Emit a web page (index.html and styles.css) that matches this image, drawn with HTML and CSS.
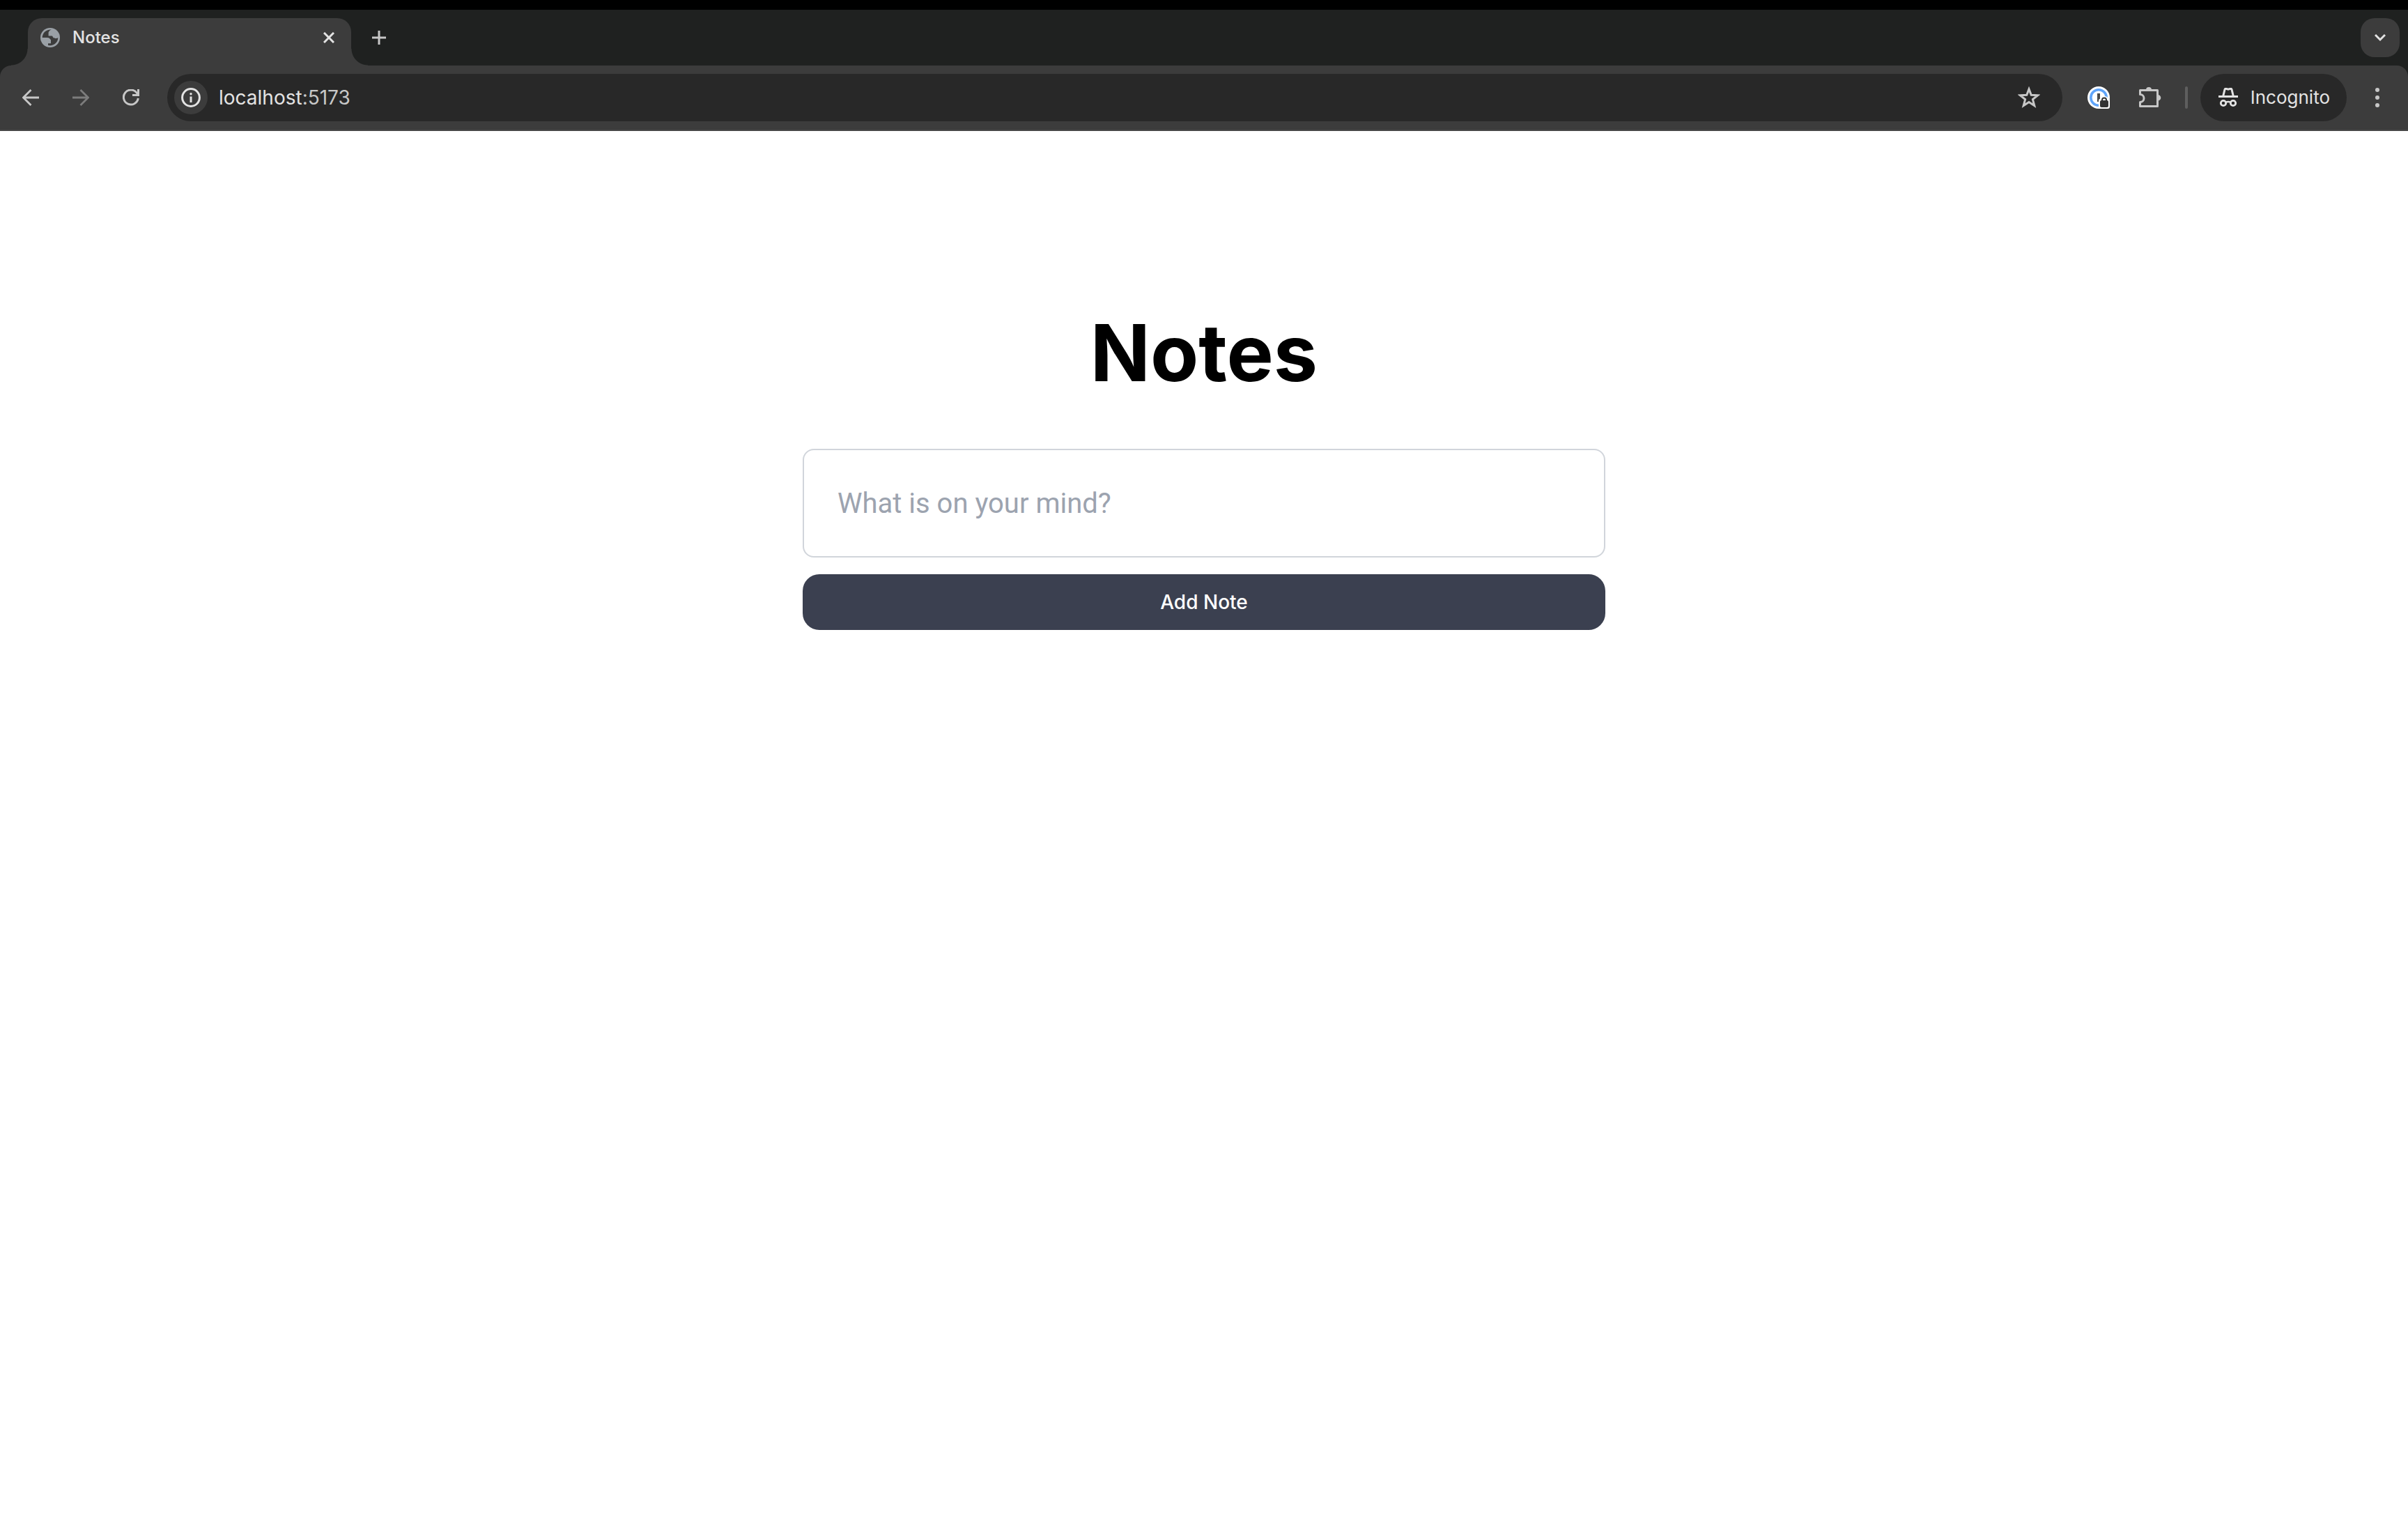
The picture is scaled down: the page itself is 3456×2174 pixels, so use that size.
FILE: index.html
```html
<!DOCTYPE html>
<html lang="en">
<head>
  <meta charset="utf-8">
  <meta name="viewport" content="width=device-width, initial-scale=1">
  <title>Notes</title>
  <link rel="stylesheet" href="styles.css">
</head>
<body>
  <header class="browser">
    <div class="tab-strip">
      <div class="tab">
        <svg class="icon-28" viewBox="0 0 28 28" aria-hidden="true">
          <circle cx="14" cy="14" r="14" fill="#9aa0a6"/>
          <path fill="#3c3c3c" d="M16 2.8C14 3 12.500 4 11.600 6.600L11.600 11.500H18L19.500 14L21.800 15.300L25.300 14.300A11.300 11.300 0 0 1 11 24.900V22.200H15V17.200L12.500 14.600L10 14H2.700A11.300 11.300 0 0 1 16 2.800Z"/>
          <path fill="#9aa0a6" d="M16.500 2.500V5.200L15 6.800H12.500V10.500H16.500L18.500 14.200H24L26 13L25 8L20 3Z"/>
        </svg>
        <span class="tab-title">Notes</span>
        <button class="icon-button close" type="button" aria-label="Close tab">
          <svg class="icon-16" viewBox="0 0 16 16"><path d="M1 1L15 15M15 1L1 15" stroke="#e3e3e3" stroke-width="3" fill="none"/></svg>
        </button>
      </div>
      <button class="icon-button new-tab" type="button" aria-label="New tab">
        <svg class="icon-20" viewBox="0 0 20 20"><path d="M10 0V20M0 10H20" stroke="#c7c7c7" stroke-width="3" fill="none"/></svg>
      </button>
      <button class="icon-button tab-search" type="button" aria-label="Search tabs">
        <svg class="icon-16" viewBox="0 0 16 16"><path d="M1 4L8 11L15 4" stroke="#e3e3e3" stroke-width="3" fill="none"/></svg>
      </button>
    </div>
    <div class="toolbar">
      <nav class="nav-buttons" aria-label="History">
        <button class="icon-button" type="button" aria-label="Back">
          <svg class="icon-24" viewBox="0 0 24 24"><path d="M24 12H2M12.500 1L1.500 12L12.500 23" stroke="#c7c7c7" stroke-width="2.800" fill="none"/></svg>
        </button>
        <button class="icon-button" type="button" aria-label="Forward" disabled>
          <svg class="icon-24" viewBox="0 0 24 24"><path d="M0 12H22M11.500 1L22.500 12L11.500 23" stroke="#7c7c7c" stroke-width="2.800" fill="none"/></svg>
        </button>
        <button class="icon-button" type="button" aria-label="Reload">
          <svg class="icon-24" viewBox="0 0 24 24"><path d="M22.300 13A10.500 10.500 0 1 1 20.500 5.500L22 8" stroke="#c7c7c7" stroke-width="3" fill="none"/><path d="M21 0H24V10H14V7H21Z" fill="#c7c7c7"/></svg>
        </button>
      </nav>
      <div class="omnibox">
        <button class="icon-button site-info" type="button" aria-label="View site information">
          <svg class="icon-28" viewBox="0 0 28 28"><circle cx="14" cy="14" r="12.400" stroke="#e3e3e3" stroke-width="3" fill="none"/><circle cx="14" cy="8.800" r="1.700" fill="#e3e3e3"/><path d="M12.500 12.500H15.500V21H12.500Z" fill="#e3e3e3"/></svg>
        </button>
        <a class="url" href="#">localhost<span class="port">:5173</span></a>
        <button class="icon-button" type="button" aria-label="Bookmark this tab">
          <svg class="icon-32" viewBox="0 0 32 32"><path d="M16 3.800L19.200 12.200L28.500 12.800L21.400 18.600L23.800 27.600L16 22.600L8.200 27.600L10.600 18.600L3.500 12.800L12.800 12.200Z" stroke="#c7c7c7" stroke-width="3" fill="none"/></svg>
        </button>
      </div>
      <div class="actions">
        <button class="icon-button" type="button" aria-label="Password manager">
          <svg class="icon-32" viewBox="0 0 32 32">
            <circle cx="16" cy="16" r="16" fill="#fff"/>
            <circle cx="16" cy="16" r="11.200" stroke="#60a5fa" stroke-width="3.600" fill="none"/>
            <path d="M14 10H18V22H14Z" fill="#4a4a4a"/>
            <path d="M16 20Q16 18 18.500 17.500Q20 14 24 14Q28 14 29.500 17L32 19V29Q32 32 29 32H16Z" fill="#fff"/>
            <path d="M21 21V19.500A3 3 0 0 1 27 19.500V21" stroke="#333333" stroke-width="2" fill="none"/>
            <rect x="18" y="20" width="12" height="10" rx="2" fill="#333333"/>
          </svg>
        </button>
        <button class="icon-button" type="button" aria-label="Extensions">
          <svg class="icon-32" viewBox="0 0 32 32"><path d="M3.500 5.500H26.500V28.500H1.500V22.500A4.700 4.700 0 0 0 1.500 11.500V5.500Z" stroke="#c7c7c7" stroke-width="3" stroke-linejoin="round" fill="none"/><path d="M10 5A4 4 0 0 1 18 5ZM27 12A4.300 4.300 0 0 1 27 20.600Z" fill="#c7c7c7"/></svg>
        </button>
        <span class="divider"></span>
      </div>
      <button class="incognito" type="button">
        <svg class="icon-28" viewBox="0 0 28 28" aria-hidden="true"><path d="M6.800 11.500L9 2.500Q9.500 1 11 1.300L14 2.200L17 1.300Q18.500 1 19 2.500L21.200 11.500" stroke="#e3e3e3" stroke-width="3" fill="none"/><path d="M0 11H28V14H0Z" fill="#e3e3e3"/><path d="M10 21Q14 19 18 21" stroke="#e3e3e3" stroke-width="2.500" fill="none"/><circle cx="7" cy="22" r="3.700" stroke="#e3e3e3" stroke-width="2.800" fill="none"/><circle cx="21" cy="22" r="3.700" stroke="#e3e3e3" stroke-width="2.800" fill="none"/></svg>
        <span>Incognito</span>
      </button>
      <button class="icon-button menu" type="button" aria-label="Menu">
        <svg class="icon-28" viewBox="0 0 28 28"><g fill="#c7c7c7"><circle cx="14" cy="3" r="3"/><circle cx="14" cy="14" r="3"/><circle cx="14" cy="25" r="3"/></g></svg>
      </button>
    </div>
  </header>
  <main class="page">
    <h1 class="title">Notes</h1>
    <form class="note-form">
      <input class="note-input" type="text" placeholder="What is on your mind?" aria-label="Note">
      <button class="add-note" type="button">Add Note</button>
    </form>
  </main>
</body>
</html>
```

FILE: styles.css
```css
*,
*::before,
*::after {
  box-sizing: border-box;
}

body {
  margin: 0;
  background: #ffffff;
  color: #000000;
  font-family: Inter, "Liberation Sans", sans-serif;
}

button {
  font: inherit;
  border: 0;
  margin: 0;
}

svg {
  display: block;
  flex: none;
}

.icon-16 { width: 16px; height: 16px; }
.icon-20 { width: 20px; height: 20px; }
.icon-24 { width: 24px; height: 24px; }
.icon-28 { width: 28px; height: 28px; }
.icon-32 { width: 32px; height: 32px; }

.icon-button {
  display: flex;
  align-items: center;
  justify-content: center;
  flex: none;
  padding: 0;
  background: transparent;
}

/* Browser frame */
.browser {
  background: #1f2120;
  border-top: 14px solid #000000;
}

.tab-strip {
  display: flex;
  height: 80px;
  padding: 12px 12px 0 40px;
}

.tab {
  position: relative;
  display: flex;
  align-items: center;
  width: 464px;
  height: 68px;
  padding: 0 24px 12px 18px;
  background: #3c3c3c;
  border-radius: 20px 20px 0 0;
}

/* Flared feet that join the tab to the toolbar */
.tab::before,
.tab::after {
  content: "";
  position: absolute;
  bottom: 0;
  width: 24px;
  height: 24px;
}

.tab::before {
  right: 100%;
  background: radial-gradient(circle at 0 0, transparent 23px, #3c3c3c 24px);
}

.tab::after {
  left: 100%;
  background: radial-gradient(circle at 100% 0, transparent 23px, #3c3c3c 24px);
}

.tab-title {
  flex: 1;
  margin-left: 18px;
  color: #e3e3e3;
  font-size: 24px;
  font-weight: 500;
  line-height: 32px;
}

.new-tab {
  width: 56px;
  height: 56px;
  margin-left: 12px;
}

.tab-search {
  width: 56px;
  height: 56px;
  margin-left: auto;
  background: #3c3c3c;
  border-radius: 20px;
}

.toolbar {
  display: flex;
  align-items: center;
  height: 94px;
  padding: 12px 20px 12px 32px;
  background: #3c3c3c;
  border-bottom: 2px solid #474747;
  border-radius: 16px 16px 0 0;
}

.nav-buttons {
  display: flex;
  gap: 48px;
  margin-right: 40px;
}

.omnibox {
  display: flex;
  flex: 1;
  align-items: center;
  height: 68px;
  padding: 0 32px 0 10px;
  background: #282828;
  border-radius: 34px;
}

.site-info {
  width: 48px;
  height: 48px;
  background: #3c3c3c;
  border-radius: 50%;
}

.url {
  flex: 1;
  margin-left: 16px;
  color: #e3e3e3;
  font-size: 28px;
  line-height: 40px;
  text-decoration: none;
}

.port {
  color: #c7c7c7;
}

.actions {
  display: flex;
  align-items: center;
  margin: 0 18px 0 36px;
  gap: 42px;
}

.divider {
  width: 4px;
  height: 32px;
  margin-left: -8px;
  background: #5e5e5e;
  border-radius: 2px;
}

.incognito {
  display: flex;
  align-items: center;
  gap: 18px;
  height: 68px;
  padding: 0 24px 0 26px;
  background: #282828;
  border-radius: 34px;
  color: #e3e3e3;
  font-size: 26px;
  line-height: 40px;
}

.menu {
  width: 48px;
  height: 48px;
  margin-left: 20px;
}

/* Notes page */
.page {
  display: flex;
  flex-direction: column;
  align-items: center;
  gap: 78px;
  padding-top: 258px;
}

.title {
  margin: 0;
  font-size: 113px;
  font-weight: 700;
  line-height: 120px;
}

.note-form {
  display: flex;
  flex-direction: column;
  gap: 24px;
  width: calc(100% / 3);
}

.note-input {
  width: 100%;
  height: 156px;
  padding: 48px;
  background: #ffffff;
  border: 2px solid #d1d5db;
  border-radius: 16px;
  color: #000000;
  font-family: Roboto, "Liberation Sans", sans-serif;
  font-size: 40px;
  line-height: 56px;
}

.note-input::placeholder {
  color: #9ca3af;
  opacity: 1;
}

.add-note {
  height: 80px;
  background: #3b4050;
  border-radius: 24px;
  color: #ffffff;
  font-size: 28px;
  font-weight: 500;
  line-height: 40px;
}
```
